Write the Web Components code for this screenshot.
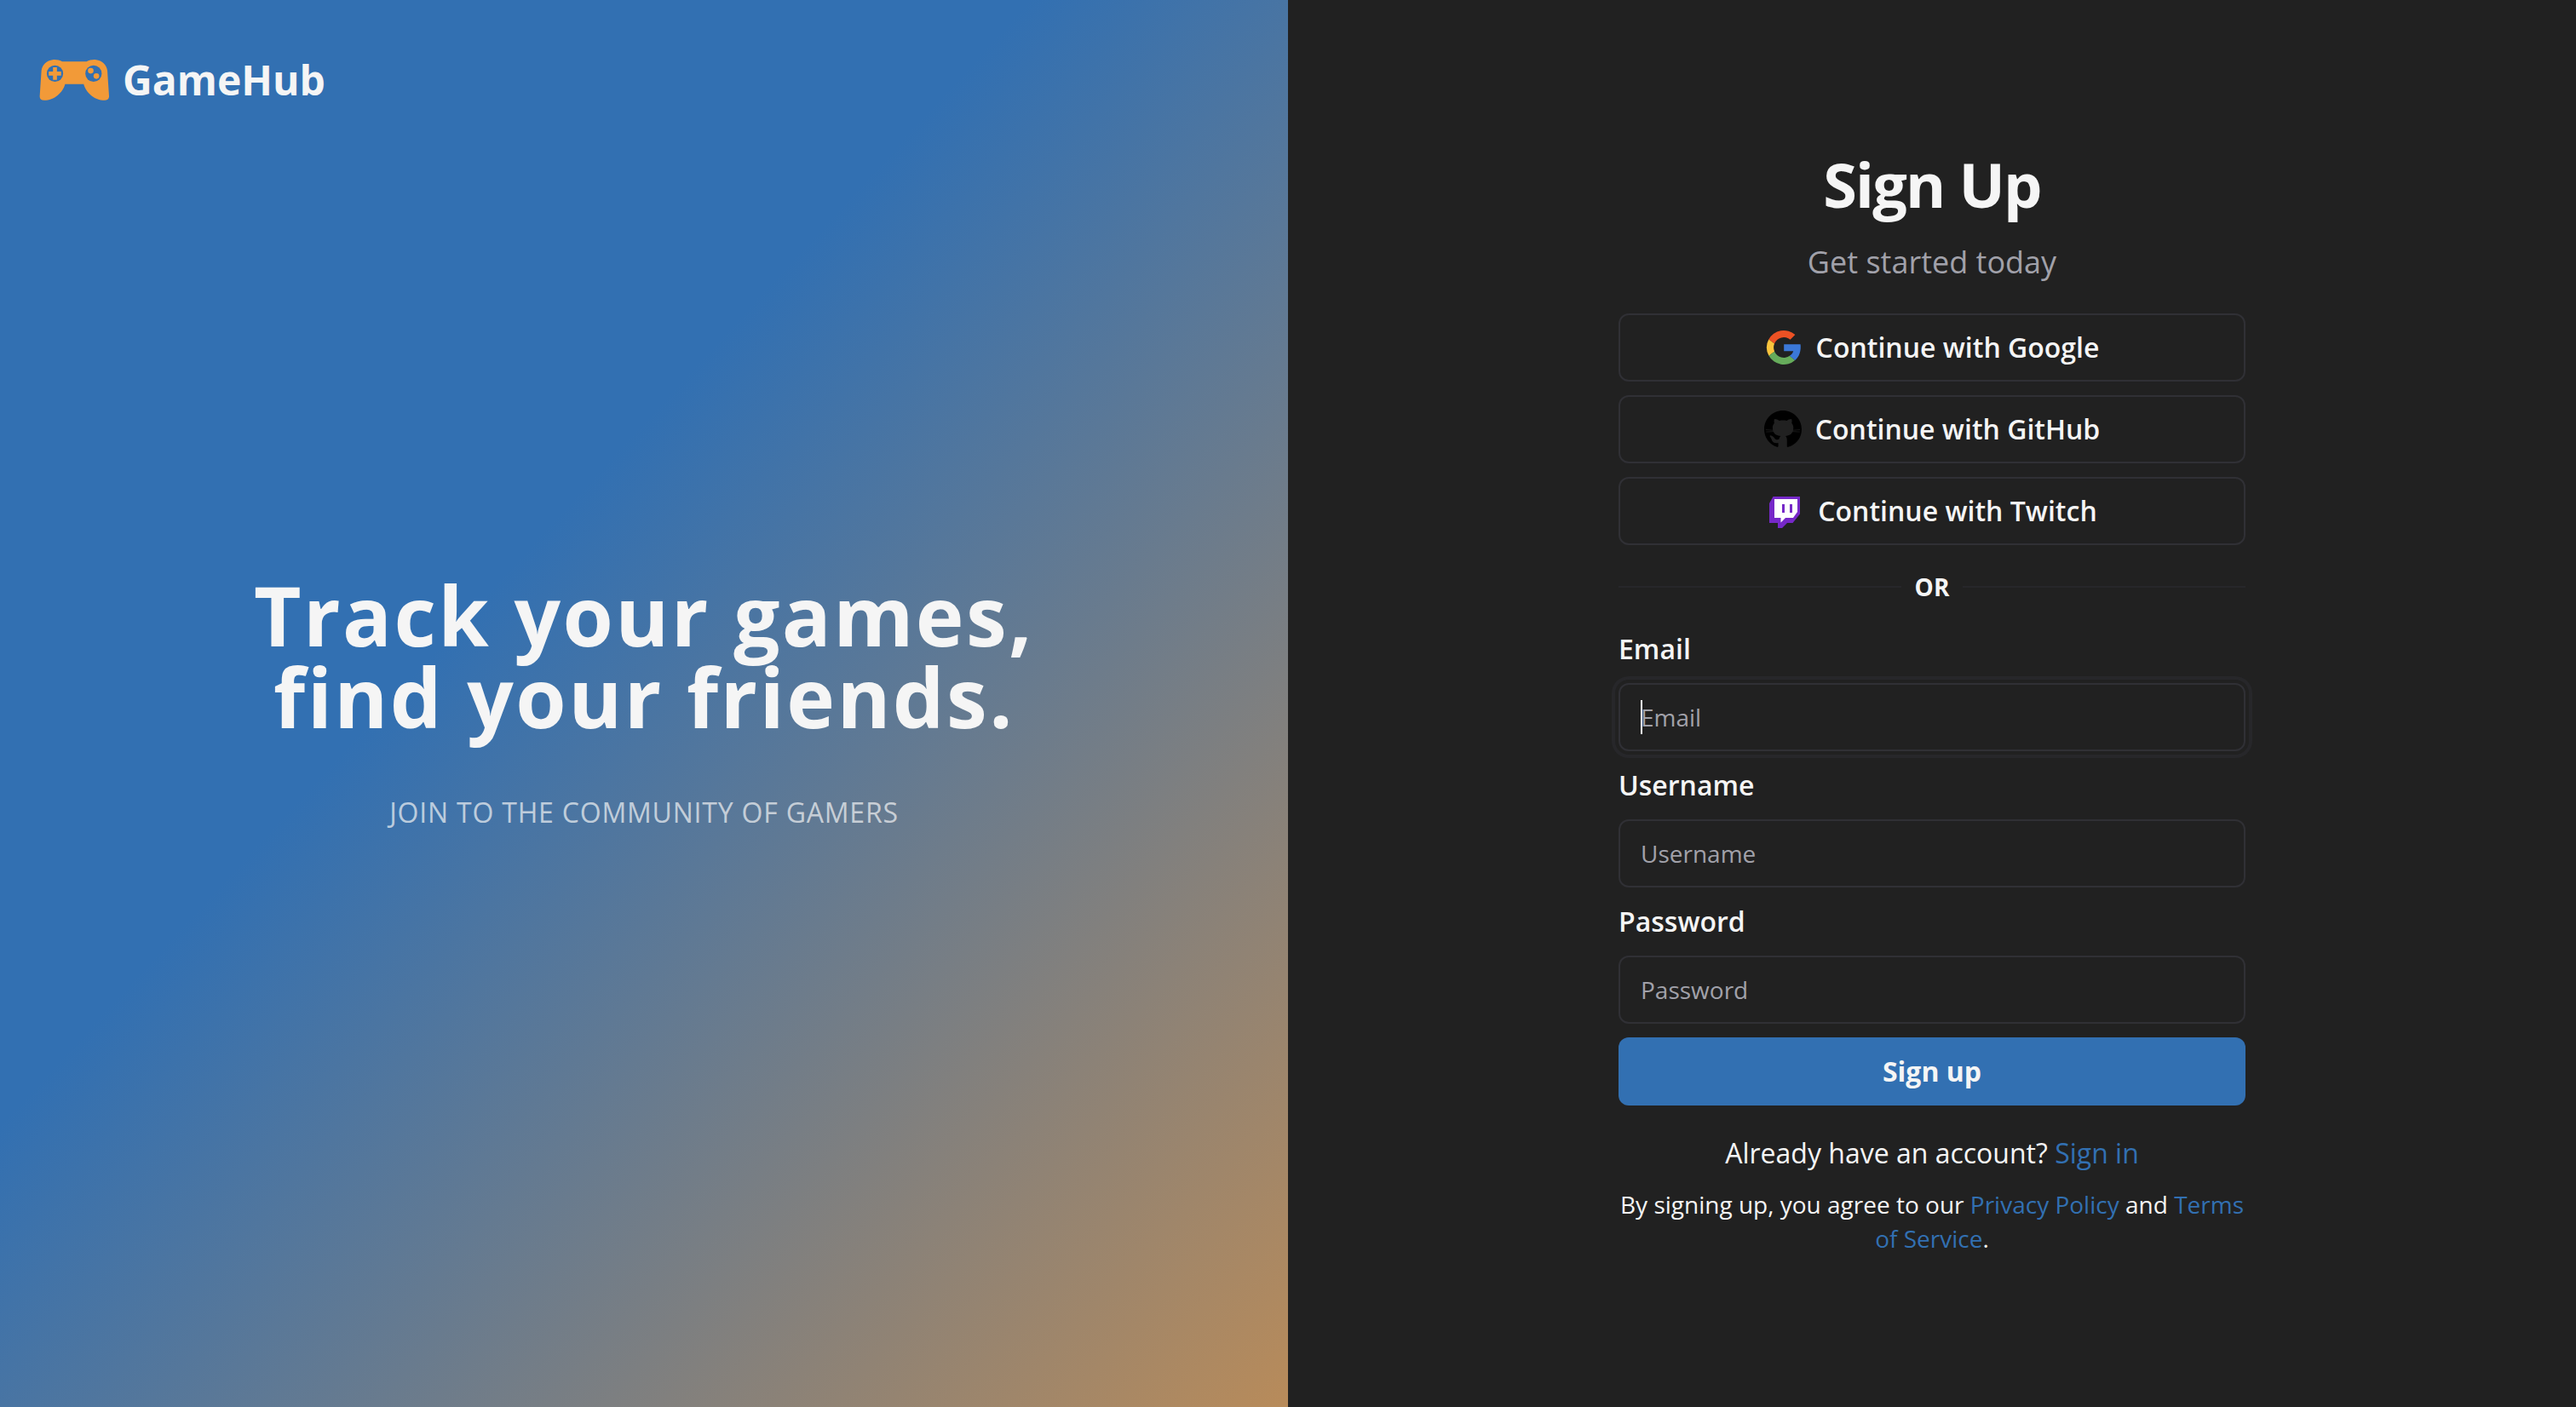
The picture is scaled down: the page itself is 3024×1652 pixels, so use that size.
<!DOCTYPE html>
<html lang="en">
<head>
<meta charset="utf-8">
<meta name="viewport" content="width=device-width, initial-scale=1">
<title>GameHub – Sign Up</title>
<style>
  :root {
    --bg: #212121;
    --fg: #f5f5f5;
    --muted: #a1a1aa;
    --border: #303035;
    --ring: #27272a;
    --primary: #3270b2;
    --accent: #f29a38;
    --radius: 12px;
  }
  body {
    margin: 0;
    background: var(--bg);
    color: var(--fg);
    font: 400 32px/48px "Open Sans", "Noto Sans", sans-serif;
  }
</style>
</head>
<body>
<auth-layout>
  <brand-panel slot="brand">
    <brand-logo slot="logo">GameHub</brand-logo>
    <span slot="title">Track your games,<br>find your friends.</span>
    <span slot="subtitle">JOIN TO THE COMMUNITY OF GAMERS</span>
  </brand-panel>
  <signup-form slot="form"></signup-form>
</auth-layout>

<script>
const define = (name, html, setup) => {
  const template = document.createElement('template');
  template.innerHTML = html;
  customElements.define(name, class extends HTMLElement {
    constructor() {
      super();
      this.attachShadow({ mode: 'open', delegatesFocus: true }).append(template.content.cloneNode(true));
    }
    connectedCallback() { if (setup) setup(this, this.shadowRoot); }
  });
};

const icons = {
  google: `<svg viewBox="0 0 44 44" aria-hidden="true"><g transform="translate(2 2)">
    <path fill="#ec5124" d="M2.3 10.6A20 20 0 0 1 33.4 5.1L27.6 10.7A12 12 0 0 0 9 15.6Z"/>
    <path fill="#fac43d" d="M2.3 10.6A20 20 0 0 0 2.5 29.7L9.1 24.8A12 12 0 0 1 9 15.6Z"/>
    <path fill="#66ac5b" d="M2.5 29.7A20 20 0 0 0 33.2 35L26.9 29.8A12 12 0 0 1 9.1 24.8Z"/>
    <path fill="#3b78d8" d="M20.2 16.2H39.6C40.5 23.5 38.4 30.7 33.2 35L26.9 29.8C29.4 28.2 30.6 26.2 31.2 24.2H20.2Z"/></g></svg>`,
  github: `<svg viewBox="0 0 24 24" aria-hidden="true">
    <path fill="#000" d="M12 0C5.37 0 0 5.373 0 12c0 5.303 3.438 9.8 8.205 11.385.6.113.82-.258.82-.577 0-.285-.01-1.04-.015-2.04-3.338.724-4.042-1.61-4.042-1.61C4.6 17.4 3.6 16.9 3.6 16.3c0-.4.8-.4 1.6.1 1.2.6 1.5 1.8 2.3 2.1 .8.3 1.6.1 2.1-.2.1-.9.4-1.4.9-1.9-2.9-.4-5.1-1.6-5.1-5.3 0-1.3.4-2.2 1.1-3-.2-.8-.3-1.8.1-2.7 1.3 0 2.2.5 3.1 1.1 1.5-.3 3.3-.3 4.7 0 .9-.6 1.8-1.1 3.1-1.1.4.9.3 1.9.1 2.7.7.8 1.1 1.7 1.1 3 0 3.7-2.2 4.900-5.1 5.3.7.5 1 1.4 1 2.500v3.9c0 .315.21.69.825.57C20.565 21.8 24 17.3 24 12c0-6.627-5.373-12-12-12"/>
    <path fill="none" stroke="#212121" stroke-width=".4" d="M1 12.300 6.500 12.700M1.200 13.700 6.500 13.400M23 12.300 17.500 12.700M22.800 13.700 17.500 13.400"/></svg>`,
  twitch: `<svg viewBox="0 0 44 44" aria-hidden="true"><path fill="#7628c8" d="M7.500 5H39V25.500L30.500 36H24L18 42H13V36H3V13Z"/>
    <path fill="#fff" d="M9 8H36V23L31 30H22L16.500 35.500V30H9Z"/><path fill="#7628c8" d="M18 14h3v10h-3zM27 14h3v10h-3z"/></svg>`
};

define('auth-layout', `
  <style>
    :host { display: grid; grid-template-columns: 1fr 1fr; min-height: 100vh; }
    main { display: grid; align-items: center; justify-content: center; grid-template-columns: minmax(0, 736px); }
  </style>
  <slot name="brand"></slot>
  <main><slot name="form"></slot></main>
`);

define('brand-logo', `
  <style>
    :host { display: flex; align-items: center; gap: 16px; font-weight: 700; font-size: 48px; line-height: 64px; }
    svg { width: 82px; height: 50px; }
  </style>
  <svg viewBox="-2 0 248 144" aria-hidden="true">
    <path fill="#f29a38" d="M80 6H166C176 1 188-1 200 0C221 2 237 17 240 38L246 128C247 138 241 144 230 144C195 144 163 115 156 86H90C83 115 51 144 16 144C5 144-1 138 0 128L6 38C9 17 25 2 46 0C58-1 70 1 80 6Z"/>
    <circle cx="54" cy="49" r="29" fill="#3270b2"/>
    <circle cx="191" cy="49" r="29" fill="#3270b2"/>
    <path fill="#f29a38" d="M47 27h14v15h15v14H61v15H47V56H32V42h15z"/>
    <circle cx="181" cy="39" r="10" fill="#f29a38"/>
    <circle cx="201" cy="58" r="10" fill="#f29a38"/>
  </svg>
  <slot></slot>
`);

define('brand-panel', `
  <style>
    :host {
      display: grid; padding: 0 46px;
      background: linear-gradient(to bottom right, var(--primary) 40%, #b88b5a 100%);
    }
    header, section { grid-area: 1 / 1; }
    header { align-self: start; padding-top: 62px; }
    section { align-self: center; display: grid; gap: 64px; text-align: center; }
    h1, p { margin: 0; letter-spacing: 0.025em; }
    h1 { font-weight: 700; font-size: 96px; line-height: 96px; }
    p { color: rgb(245 245 245 / 0.7); }
  </style>
  <header><slot name="logo"></slot></header>
  <section>
    <h1><slot name="title"></slot></h1>
    <p><slot name="subtitle"></slot></p>
  </section>
`);

define('oauth-button', `
  <style>
    :host { display: block; }
    button {
      display: flex; align-items: center; justify-content: center; gap: 16px;
      box-sizing: border-box; width: 100%; height: 80px; padding: 0 32px;
      color: inherit; background: transparent; border: 2px solid var(--border); border-radius: var(--radius);
      font: inherit; font-weight: 600; cursor: pointer;
    }
    .icon { display: flex; }
    svg { width: 44px; height: 44px; }
  </style>
  <button type="button"><span class="icon"></span><slot></slot></button>
`, (el, root) => { root.querySelector('.icon').innerHTML = icons[el.getAttribute('icon')]; });

define('or-divider', `
  <style>
    :host { display: flex; align-items: center; gap: 16px; font-weight: 700; font-size: 28px; line-height: 42px; }
    hr { flex: 1; margin: 0; border: 0; height: 2px; background: var(--ring); }
  </style>
  <hr><slot></slot><hr>
`);

define('text-field', `
  <style>
    :host { display: grid; gap: 16px; }
    label { font-weight: 600; }
    .box { position: relative; display: grid; }
    input {
      box-sizing: border-box; width: 100%; height: 80px; padding: 0 24px;
      color: inherit; background: var(--bg); border: 2px solid var(--border); border-radius: var(--radius);
      font: inherit; font-size: 28px; outline: none; caret-color: #fff;
    }
    input::placeholder { color: var(--muted); opacity: 1; }
    input:focus { box-shadow: 0 0 0 4px var(--bg), 0 0 0 8px var(--ring); }
    .caret { display: none; position: absolute; left: 26px; top: 20px; bottom: 20px; width: 2px; background: #fff; pointer-events: none; }
    input:focus:placeholder-shown { caret-color: transparent; }
    input:focus:placeholder-shown + .caret { display: block; }
  </style>
  <label for="field"></label>
  <div class="box"><input id="field"><span class="caret"></span></div>
`, (el, root) => {
  const label = el.getAttribute('label');
  const input = root.querySelector('input');
  root.querySelector('label').textContent = label;
  input.placeholder = label;
  input.type = el.getAttribute('type') || 'text';
  if (el.hasAttribute('active')) input.focus();
});

define('signup-form', `
  <style>
    :host { display: block; padding-bottom: 2px; }
    h2, p { margin: 0; text-align: center; }
    h2 { font-weight: 700; font-size: 72px; line-height: 80px; letter-spacing: -0.025em; }
    .lead { margin: 24px 0 32px; font-size: 36px; line-height: 56px; color: var(--muted); }
    .stack, form { display: grid; gap: 16px; }
    or-divider { margin: 28px 0; }
    .submit {
      height: 80px; border: 0; border-radius: var(--radius); background: var(--primary);
      color: inherit; font: inherit; font-weight: 700; cursor: pointer;
    }
    .switch { margin: 32px 0 16px; }
    .terms { font-size: 28px; line-height: 40px; }
    a { color: var(--primary); text-decoration: none; }
  </style>
  <h2>Sign Up</h2>
  <p class="lead">Get started today</p>
  <div class="stack">
    <oauth-button icon="google">Continue with Google</oauth-button>
    <oauth-button icon="github">Continue with GitHub</oauth-button>
    <oauth-button icon="twitch">Continue with Twitch</oauth-button>
  </div>
  <or-divider>OR</or-divider>
  <form>
    <text-field label="Email" type="email" active></text-field>
    <text-field label="Username"></text-field>
    <text-field label="Password" type="password"></text-field>
    <button class="submit" type="submit">Sign up</button>
  </form>
  <p class="switch">Already have an account? <a href="#signin">Sign in</a></p>
  <p class="terms">By signing up, you agree to our <a href="#privacy">Privacy Policy</a> and <a href="#terms">Terms of Service</a>.</p>
`);
</script>
</body>
</html>
